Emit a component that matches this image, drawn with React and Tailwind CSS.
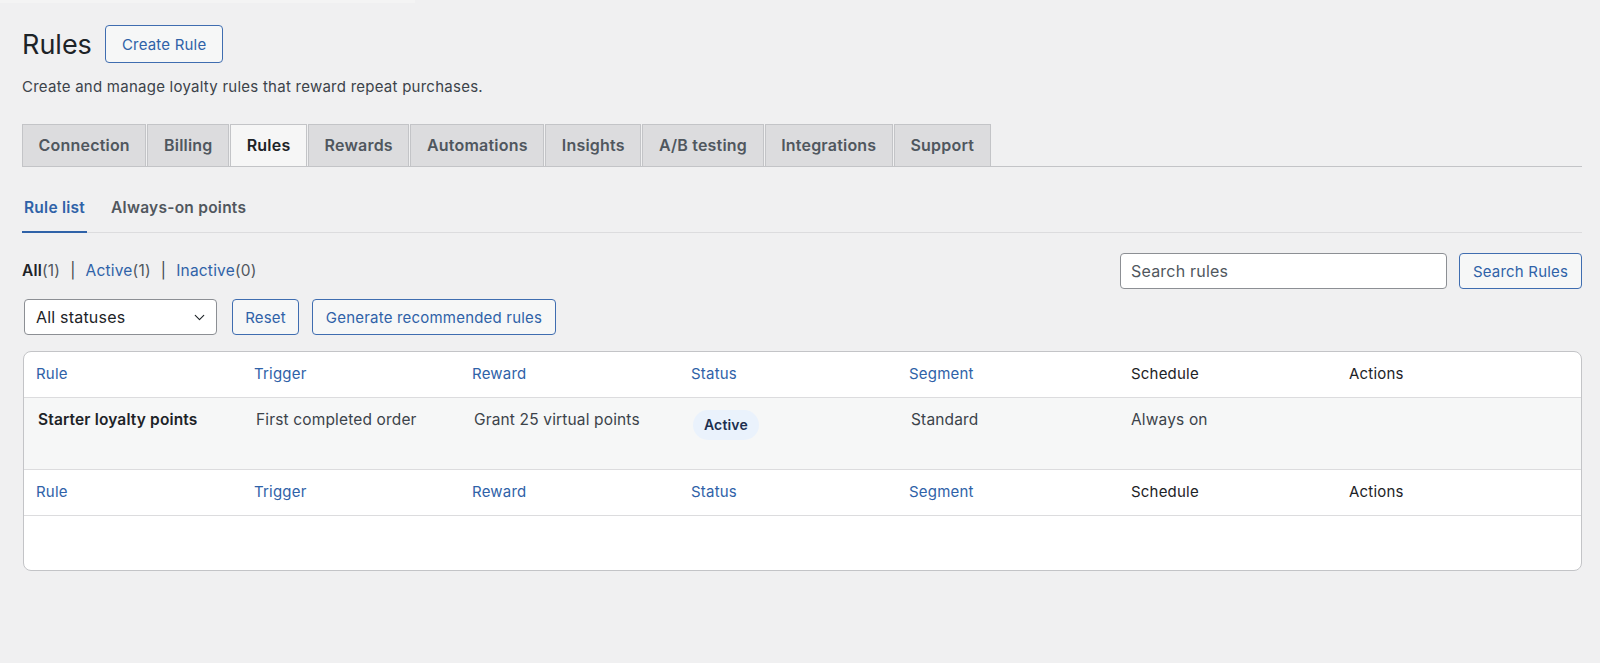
import React, { useState } from 'react'
import { ChevronDown } from 'lucide-react'

const MAIN_TABS = ['Connection', 'Billing', 'Rules', 'Rewards', 'Automations', 'Insights', 'A/B testing', 'Integrations', 'Support']

const COLUMNS = [
  { label: 'Rule', sortable: true },
  { label: 'Trigger', sortable: true },
  { label: 'Reward', sortable: true },
  { label: 'Status', sortable: true },
  { label: 'Segment', sortable: true },
  { label: 'Schedule', sortable: false },
  { label: 'Actions', sortable: false },
]

const RULES = [
  {
    name: 'Starter loyalty points',
    trigger: 'First completed order',
    reward: 'Grant 25 virtual points',
    status: 'Active',
    segment: 'Standard',
    schedule: 'Always on',
  },
]

// same column widths for header, body and footer rows
const GRID = 'grid grid-cols-[218px_218px_219px_218px_222px_218px_1fr]'

// ── Small pieces ──────────────────────────────────────────────────────────────

function OutlineButton({ children, className = '' }) {
  return (
    <button
      type="button"
      className={`h-9 px-3 rounded-[4px] border border-[#3f6db0] bg-[#f6f7f7] text-[15px] tracking-[0.2px] text-[#2f62a8] leading-none ${className}`}
    >
      {children}
    </button>
  )
}

function HeaderRow({ border }) {
  return (
    <div className={`${GRID} h-[46px] items-center pl-[12px] pr-[11px] ${border}`}>
      {COLUMNS.map(col => (
        <span
          key={col.label}
          className={`text-[15px] tracking-[0.2px] ${col.sortable ? 'text-[#2f62a8]' : 'text-[#1d2327]'}`}
        >
          {col.label}
        </span>
      ))}
    </div>
  )
}

function SubTab({ active, onClick, children }) {
  return (
    <button
      type="button"
      onClick={onClick}
      className={`px-[2px] pb-[12px] -mb-px border-b-2 text-[15.5px] tracking-[0.25px] font-semibold leading-[22px] ${
        active ? 'border-[#2f62a8] text-[#2f62a8]' : 'border-transparent text-[#50575e]'
      }`}
    >
      {children}
    </button>
  )
}

// ── App ───────────────────────────────────────────────────────────────────────

export default function App() {
  const [tab, setTab] = useState('Rules')
  const [subTab, setSubTab] = useState('list')

  return (
    <div className="min-h-screen bg-[#f0f0f1] font-['Inter',sans-serif] text-[#3c434a]">
      <div className="h-[3px] w-[415px] bg-[#f4f4f4]" />

      <div className="pl-[22px] pr-[18px]">
        {/* page title */}
        <div className="flex items-center mt-[22px] gap-[13px]">
          <h1 className="text-[27px] leading-none text-[#1d2327]">Rules</h1>
          <OutlineButton className="h-[38px] px-[16px]">Create Rule</OutlineButton>
        </div>
        <p className="mt-[13px] text-[15px] tracking-[0.25px] leading-[22px]">
          Create and manage loyalty rules that reward repeat purchases.
        </p>

        {/* main tabs */}
        <nav className="mt-[26px] flex border-b border-[#c3c4c7]">
          {MAIN_TABS.map(name => (
            <button
              key={name}
              type="button"
              onClick={() => setTab(name)}
              className={`h-[42px] px-[15.6px] pb-[2px] mr-px border border-b-0 border-[#c3c4c7] text-[16px] tracking-[0.2px] font-semibold ${
                name === tab ? 'bg-[#f6f6f6] text-[#1d2327]' : 'bg-[#dcdcde] text-[#50575e]'
              }`}
            >
              {name}
            </button>
          ))}
        </nav>

        {/* sub tabs */}
        <div className="mt-[30px] flex gap-[22px] border-b border-[#dcdcde]">
          <SubTab active={subTab === 'list'} onClick={() => setSubTab('list')}>Rule list</SubTab>
          <SubTab active={subTab === 'always'} onClick={() => setSubTab('always')}>Always-on points</SubTab>
        </div>

        {/* status links + search */}
        <div className="mt-[20px] flex items-center justify-between">
          <div className="text-[15.5px] tracking-[0.2px] text-[#50575e]">
            <span className="font-semibold text-[#1d2327]">All</span>(1)
            <span className="mx-[10px] text-[#3c434a]">|</span>
            <span className="text-[#2f62a8]">Active</span>(1)
            <span className="mx-[10px] text-[#3c434a]">|</span>
            <span className="text-[#2f62a8]">Inactive</span>(0)
          </div>
          <div className="flex items-center gap-[12px]">
            <input
              type="text"
              placeholder="Search rules"
              className="w-[327px] h-9 px-[10px] rounded-[4px] border border-[#8c8f94] bg-white text-[16px] tracking-[0.2px] text-[#1d2327] placeholder:text-[#50575e] outline-none"
            />
            <OutlineButton className="w-[123px]">Search Rules</OutlineButton>
          </div>
        </div>

        {/* filters */}
        <div className="mt-[10px] flex items-center">
          <div className="ml-[2px] w-[193px] h-9 pl-[11px] pr-[8px] flex items-center justify-between rounded-[4px] border border-[#8c8f94] bg-white text-[16px] tracking-[0.2px] text-[#1d2327]">
            <span>All statuses</span>
            <ChevronDown size={17} strokeWidth={1.6} />
          </div>
          <OutlineButton className="ml-[15px] w-[67px]">Reset</OutlineButton>
          <OutlineButton className="ml-[13px] w-[244px]">Generate recommended rules</OutlineButton>
        </div>

        {/* rules table */}
        <div className="mt-[16px] ml-px rounded-[8px] border border-[#c3c4c7] bg-white overflow-hidden">
          <HeaderRow border="border-b border-[#dcdcde]" />
          {RULES.map(rule => (
            <div
              key={rule.name}
              className={`${GRID} h-[72px] items-start pl-[14px] pr-[11px] pt-[11px] bg-[#f6f7f7] border-b border-[#dcdcde] text-[15.5px] tracking-[0.15px] leading-[22px]`}
            >
              <span className="font-semibold text-[#1d2327]">{rule.name}</span>
              <span>{rule.trigger}</span>
              <span>{rule.reward}</span>
              <span>
                <span className="inline-block mt-px px-[11px] py-[4px] rounded-full bg-[#eaf2fc] text-[14px] font-semibold text-[#1d2f4f]">
                  {rule.status}
                </span>
              </span>
              <span>{rule.segment}</span>
              <span className="-ml-[2px]">{rule.schedule}</span>
              <span />
            </div>
          ))}
          <HeaderRow border="border-b border-[#dcdcde]" />
          <div className="h-[54px]" />
        </div>
      </div>
    </div>
  )
}
